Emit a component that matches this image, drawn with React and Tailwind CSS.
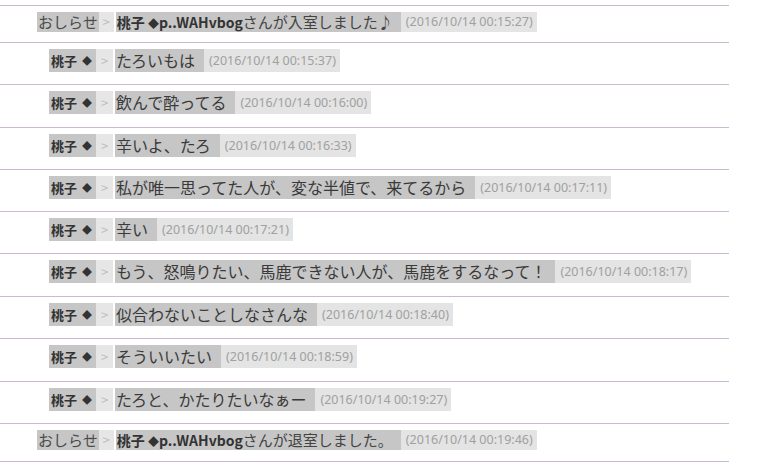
import React from "react";

const FONT = { fontFamily: '"Noto Sans CJK JP", "Noto Sans", sans-serif' };

const rows = [
  { type: "notice", h: "h-[37px]", who: "桃子 ◆p..WAHvbog", text: "さんが入室しました♪", time: "(2016/10/14 00:15:27)" },
  { type: "msg", h: "h-[42px]", text: "たろいもは", time: "(2016/10/14 00:15:37)" },
  { type: "msg", h: "h-[43px]", text: "飲んで酔ってる", time: "(2016/10/14 00:16:00)" },
  { type: "msg", h: "h-[42px]", text: "辛いよ、たろ", time: "(2016/10/14 00:16:33)" },
  { type: "msg", h: "h-[42px]", text: "私が唯一思ってた人が、変な半値で、来てるから", time: "(2016/10/14 00:17:11)" },
  { type: "msg", h: "h-[42px]", text: "辛い", time: "(2016/10/14 00:17:21)" },
  { type: "msg", h: "h-[43px]", text: "もう、怒鳴りたい、馬鹿できない人が、馬鹿をするなって！", time: "(2016/10/14 00:18:17)" },
  { type: "msg", h: "h-[42px]", text: "似合わないことしなさんな", time: "(2016/10/14 00:18:40)" },
  { type: "msg", h: "h-[43px]", text: "そういいたい", time: "(2016/10/14 00:18:59)" },
  { type: "msg", h: "h-[42px]", text: "たろと、かたりたいなぁー", time: "(2016/10/14 00:19:27)" },
  { type: "notice", h: "h-[38px]", who: "桃子 ◆p..WAHvbog", text: "さんが退室しました。", time: "(2016/10/14 00:19:46)" },
];

const Time = ({ value }) => (
  <span
    className="flex items-center bg-[#e4e4e4] pl-[5px] pr-[4px] text-[12.5px] text-[#a0a0a0]"
    style={{ fontFamily: '"Noto Sans", sans-serif' }}
  >
    {value}
  </span>
);

const Arrow = ({ w }) => (
  <span className={`flex items-center justify-center bg-[#e6e6e6] text-[13px] text-[#bdbdbd] ${w}`}>
    &gt;
  </span>
);

const Who = ({ who }) => {
  const [name, rest] = who.split("◆");
  return (
    <b className="text-[14px] text-[#333]">
      {name}
      <span className="text-[11px]">◆</span>
      {rest}
    </b>
  );
};

const NoticeRow = ({ row }) => (
  <div className={`${row.h} border-b border-[#cbb8d2] pt-[6px]`}>
    <div className="ml-[37px] flex h-[20px] items-stretch leading-[20px]">
      <span className="bg-[#c6c6c6] px-[1px] text-[15px] text-[#4a4a4a]">おしらせ</span>
      <Arrow w="w-[15px]" />
      <span className="ml-[2px] bg-[#c6c6c6] pl-[1px] pr-[8px] text-[15px] text-[#444]">
        <Who who={row.who} />
        {row.text}
      </span>
      <Time value={row.time} />
    </div>
  </div>
);

const MsgRow = ({ row }) => (
  <div className={`${row.h} border-b border-[#cbb8d2] pt-[6px]`}>
    <div className="ml-[49px] flex h-[23px] items-stretch leading-[23px]">
      <span className="flex items-center bg-[#c6c6c6] pl-[2px] pr-[4px] text-[13px] font-bold text-[#333]">
        桃子 <span className="ml-[5px] text-[10px]">◆</span>
      </span>
      <Arrow w="w-[17px]" />
      <span className="ml-[2px] bg-[#c6c6c6] pl-[1px] pr-[9px] text-[16px] text-[#3a3a3a]">
        {row.text}
      </span>
      <Time value={row.time} />
    </div>
  </div>
);

export default function App() {
  return (
    <div className="h-[465px] w-[775px] overflow-hidden bg-white" style={FONT}>
      <div className="mt-[5px] w-[729px] border-t border-[#cbb8d2]">
        {rows.map((row, i) =>
          row.type === "notice" ? (
            <NoticeRow key={i} row={row} />
          ) : (
            <MsgRow key={i} row={row} />
          )
        )}
      </div>
    </div>
  );
}
